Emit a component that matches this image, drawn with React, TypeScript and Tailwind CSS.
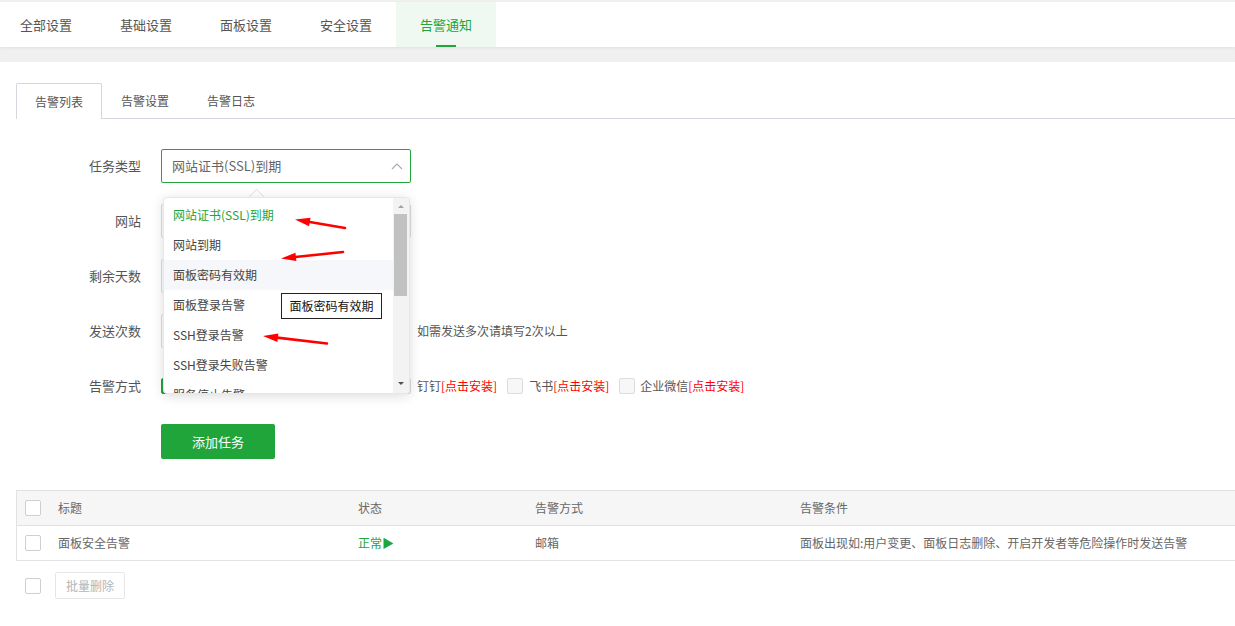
import React from "react";

function Arrow({ tail, tip }: { tail: [number, number]; tip: [number, number] }) {
  const dx = tip[0] - tail[0];
  const dy = tip[1] - tail[1];
  const len = Math.hypot(dx, dy);
  const ux = dx / len;
  const uy = dy / len;
  const hl = 15;
  const hw = 4.2;
  const bx = tip[0] - ux * hl;
  const by = tip[1] - uy * hl;
  const px = -uy;
  const py = ux;
  const pts = `${tip[0]},${tip[1]} ${bx + px * hw},${by + py * hw} ${bx - px * hw},${by - py * hw}`;
  return (
    <g>
      <line x1={tail[0]} y1={tail[1]} x2={bx + ux * 3} y2={by + uy * 3} stroke="#ff0000" strokeWidth={2.6} strokeLinecap="round" />
      <polygon points={pts} fill="#ff0000" />
    </g>
  );
}

function Box({ checked = false, soft = false }: { checked?: boolean; soft?: boolean }) {
  if (checked) {
    return (
      <span className="w-[16px] h-[16px] rounded-[2px] bg-[#20a53a] border border-[#20a53a] flex items-center justify-center shrink-0">
        <svg width="10" height="8" viewBox="0 0 10 8">
          <polyline points="1,4 4,7 9,1" fill="none" stroke="#fff" strokeWidth="1.6" />
        </svg>
      </span>
    );
  }
  return (
    <span
      className={`block w-[16px] h-[16px] rounded-[2px] border shrink-0 ${
        soft ? "border-[#dcdcdc] bg-[#f7f7f8]" : "border-[#cfcfcf] bg-white"
      }`}
    />
  );
}

const navTabs = ["全部设置", "基础设置", "面板设置", "安全设置", "告警通知"];
const subTabs = ["告警列表", "告警设置", "告警日志"];
const options = [
  "网站证书(SSL)到期",
  "网站到期",
  "面板密码有效期",
  "面板登录告警",
  "SSH登录告警",
  "SSH登录失败告警",
  "服务停止告警",
];

export default function App() {
  return (
    <div className="relative w-[1235px] h-[626px] overflow-hidden bg-white font-['Noto_Sans_CJK_SC','Noto_Sans',sans-serif] text-[#555]">
      <div className="h-[2px] bg-[#f0f0f0]" />
      <nav className="relative z-10 h-[45px] bg-white flex shadow-[0_1px_3px_rgba(0,0,0,0.07)]">
        <div className="flex -ml-[4px]">
          {navTabs.map((t, i) => {
            const active = i === 4;
            return (
              <div
                key={t}
                className={`relative w-[100px] h-[45px] flex items-center justify-center text-[13px] ${
                  active ? "bg-[#eff9f1] text-[#20a53a]" : "text-[#555]"
                }`}
              >
                {t}
                {active && <span className="absolute bottom-0 left-[40px] w-[20px] h-[2px] bg-[#20a53a]" />}
              </div>
            );
          })}
        </div>
      </nav>
      <div className="h-[15px] bg-[#f0f0f0]" />

      <div className="pl-[16px] pt-[21px]">
        {/* sub tabs */}
        <div className="flex h-[36px] border-b border-[#d6d6df]">
          {subTabs.map((t, i) => (
            <div
              key={t}
              className={`h-[36px] flex items-center text-[12px] text-[#555] ${
                i === 0
                  ? "px-[18px] bg-white border border-b-0 border-[#d6d6df] rounded-t-[2px] -mb-px"
                  : "px-[19px]"
              }`}
            >
              {t}
            </div>
          ))}
        </div>

        {/* form */}
        <div className="mt-[30px]">
          <div className="flex items-center h-[34px] mb-[21px]">
            <div className="w-[125px] text-right text-[13px] text-[#555]">任务类型</div>
            <div className="relative ml-[20px] z-20">
              <div className="w-[250px] h-[34px] border border-[#20a53a] rounded-[2px] pl-[10px] pr-[4px] flex items-center justify-between text-[13px] text-[#666]">
                <span>网站证书(SSL)到期</span>
                <svg width="12" height="7" viewBox="0 0 12 7" className="mr-[3px]">
                  <polyline points="1,6 6,1 11,6" fill="none" stroke="#aaa" strokeWidth="1.1" />
                </svg>
              </div>

              {/* dropdown */}
              <div className="absolute left-[2px] top-[48px] w-[247px] h-[197px]">
                <span className="absolute left-[88px] -top-[6px] w-[11px] h-[11px] rotate-45 bg-white border-l border-t border-[#e4e7ed]" />
                <div className="relative w-full h-full bg-white border border-[#e4e7ed] rounded-[4px] shadow-[0_2px_12px_rgba(0,0,0,0.14)] overflow-hidden">
                  <div className="pt-[2px] pr-[16px]">
                    {options.map((o, i) => (
                      <div
                        key={o}
                        className={`h-[30px] pl-[9px] flex items-center text-[12px] ${
                          i === 0 ? "text-[#20a53a]" : "text-[#444]"
                        } ${i === 2 ? "bg-[#f5f7fa]" : ""}`}
                      >
                        {o}
                      </div>
                    ))}
                  </div>
                  {/* scrollbar */}
                  <div className="absolute right-0 top-0 bottom-0 w-[16px] bg-[#f3f3f3]">
                    <svg width="16" height="10" viewBox="0 0 16 10" className="absolute top-[3px] left-0">
                      <polygon points="5,7 11,7 8,4" fill="#a3a3a3" />
                    </svg>
                    <div className="absolute left-[1px] right-[2px] top-[16px] h-[82px] bg-[#c1c1c1]" />
                    <svg width="16" height="10" viewBox="0 0 16 10" className="absolute bottom-[4px] left-0">
                      <polygon points="5,3 11,3 8,6" fill="#505050" />
                    </svg>
                  </div>
                  {/* native tooltip */}
                  <div className="absolute left-[117px] top-[95px] w-[101px] h-[26px] bg-white border border-[#222] flex items-center justify-center text-[12px] text-[#111]">
                    面板密码有效期
                  </div>
                </div>
              </div>
            </div>
          </div>

          <div className="flex items-center h-[34px] mb-[21px]">
            <div className="w-[125px] text-right text-[13px] text-[#555]">网站</div>
            <div className="ml-[20px] w-[250px] h-[34px] border border-[#ddd] rounded-[2px]" />
          </div>

          <div className="flex items-center h-[34px] mb-[21px]">
            <div className="w-[125px] text-right text-[13px] text-[#555]">剩余天数</div>
            <div className="ml-[20px] w-[200px] h-[34px] border border-[#ddd] rounded-[2px]" />
          </div>

          <div className="flex items-center h-[34px] mb-[21px]">
            <div className="w-[125px] text-right text-[13px] text-[#555]">发送次数</div>
            <div className="ml-[20px] w-[246px] h-[34px] border border-[#ddd] rounded-[2px]" />
            <span className="ml-[10px] text-[12px] text-[#555]">如需发送多次请填写2次以上</span>
          </div>

          <div className="flex items-center h-[34px] mb-[21px]">
            <div className="w-[125px] text-right text-[13px] text-[#555]">告警方式</div>
            <div className="ml-[20px] flex items-center text-[12px] text-[#555]">
              <div className="w-[234px] flex items-center overflow-hidden">
                <Box checked />
              </div>
              <Box soft />
              <span className="ml-[6px]">钉钉</span>
              <span className="text-[#ff0000] mr-[10px]">[点击安装]</span>
              <Box soft />
              <span className="ml-[6px]">飞书</span>
              <span className="text-[#ff0000] mr-[10px]">[点击安装]</span>
              <Box soft />
              <span className="ml-[5px]">企业微信</span>
              <span className="text-[#ff0000]">[点击安装]</span>
            </div>
          </div>

          <button className="ml-[145px] w-[114px] h-[35px] bg-[#20a53a] rounded-[2px] text-white text-[13px] flex items-center justify-center">
            添加任务
          </button>
        </div>

        {/* table */}
        <div className="mt-[31px] border-l border-t border-[#e2e2e2] text-[12px] text-[#666]">
          <div className="flex items-center h-[35px] bg-[#f6f6f6] border-b border-[#e2e2e2]">
            <div className="w-[41px] pl-[8px] flex items-center">
              <Box />
            </div>
            <div className="w-[300px]">标题</div>
            <div className="w-[177px]">状态</div>
            <div className="w-[265px]">告警方式</div>
            <div className="flex-1">告警条件</div>
          </div>
          <div className="flex items-center h-[35px] border-b border-[#e2e2e2]">
            <div className="w-[41px] pl-[8px] flex items-center">
              <Box />
            </div>
            <div className="w-[300px]">面板安全告警</div>
            <div className="w-[177px] text-[#20a53a]">正常▶</div>
            <div className="w-[265px]">邮箱</div>
            <div className="flex-1">面板出现如:用户变更、面板日志删除、开启开发者等危险操作时发送告警</div>
          </div>
        </div>

        <div className="flex items-center mt-[11px]">
          <div className="pl-[9px]">
            <Box />
          </div>
          <button className="ml-[14px] h-[27px] w-[70px] border border-[#e6e6e6] rounded-[2px] bg-white text-[12px] text-[#b5b5b5] flex items-center justify-center">
            批量删除
          </button>
        </div>
      </div>

      {/* red annotation arrows */}
      <svg className="absolute left-0 top-0 z-30 pointer-events-none" width="1235" height="626" viewBox="0 0 1235 626">
        <Arrow tail={[345, 228]} tip={[295, 219.5]} />
        <Arrow tail={[343, 252]} tip={[281, 258.5]} />
        <Arrow tail={[327, 343.5]} tip={[263, 336]} />
      </svg>
    </div>
  );
}
